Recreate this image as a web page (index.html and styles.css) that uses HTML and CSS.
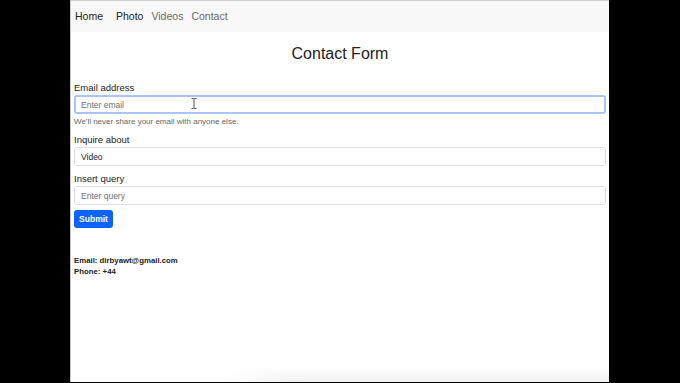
FILE: index.html
```html
<!DOCTYPE html>
<html lang="en">
<head>
  <meta charset="UTF-8">
  <meta name="viewport" content="width=device-width, initial-scale=1.0">
  <title>Contact</title>
  <link rel="stylesheet" href="styles.css">
</head>
<body>
  <div class="page">
    <nav class="navbar">
      <a class="nav-link active" href="#">Home</a>
      <a class="nav-link active" href="#">Photo</a>
      <a class="nav-link" href="#">Videos</a>
      <a class="nav-link" href="#">Contact</a>
    </nav>

    <h1 class="title">Contact Form</h1>

    <form class="contact-form">
      <label class="form-label" for="email">Email address</label>
      <div class="field-wrap">
        <input type="email" id="email" class="form-control focused" placeholder="Enter email">
        <svg class="text-cursor" width="6" height="11" viewBox="0 0 6 11">
          <path d="M0.5 0.5h2l0.5 0.5l0.5 -0.5h2M3 1v9M0.5 10.5h2l0.5 -0.5l0.5 0.5h2" fill="none" stroke="#555" stroke-width="1"/>
        </svg>
      </div>
      <div class="form-text">We'll never share your email with anyone else.</div>

      <label class="form-label" for="inquire">Inquire about</label>
      <input type="text" id="inquire" class="form-control" value="Video">

      <label class="form-label" for="query">Insert query</label>
      <input type="text" id="query" class="form-control" placeholder="Enter query">

      <button type="button" class="btn-submit">Submit</button>
    </form>

    <div class="contact-info">
      <div>Email: dirbyawt@gmail.com</div>
      <div>Phone: +44</div>
    </div>
  </div>
</body>
</html>
```

FILE: styles.css
```css
body {
  margin: 0;
  background: #000;
  height: 383px;
  overflow: hidden;
  font-family: 'Liberation Sans', Arial, Helvetica, sans-serif;
}

.page {
  width: 539px;
  height: 382px;
  margin-left: 70px;
  background: #fff;
  border-left: 1px solid #c8c8c8;
  border-top: 1px solid #d0d0d0;
  position: relative;
  overflow: hidden;
  box-sizing: border-box;
}

.page::after {
  content: '';
  position: absolute;
  left: 150px;
  right: 0;
  bottom: 0;
  height: 16px;
  background: linear-gradient(to bottom, rgba(0, 0, 0, 0), rgba(0, 0, 0, 0.06));
  -webkit-mask-image: linear-gradient(to right, transparent, #000 80px);
  mask-image: linear-gradient(to right, transparent, #000 80px);
}

.navbar {
  height: 31px;
  box-sizing: border-box;
  padding-bottom: 2px;
  background: #f8f8f8;
  display: flex;
  align-items: center;
  padding-left: 4px;
  gap: 8px;
}

.nav-link {
  font-size: 10.5px;
  color: #6a6a6a;
  text-decoration: none;
}

.nav-link.active {
  color: #222;
}

.nav-link:first-child {
  margin-right: 5px;
}

.title {
  margin: 12px 0 0;
  font-size: 16px;
  line-height: 20px;
  font-weight: normal;
  text-align: center;
  color: #222;
}

.contact-form {
  padding: 0 3px 0 3px;
  margin-top: 18px;
  display: flex;
  flex-direction: column;
  align-items: flex-start;
}

.form-label {
  font-size: 9.5px;
  line-height: 12px;
  color: #222;
  margin-bottom: 1px;
}

.field-wrap {
  position: relative;
  width: 100%;
}

.form-control {
  display: block;
  width: 100%;
  height: 19px;
  box-sizing: border-box;
  padding: 0 6px;
  font-family: inherit;
  font-size: 8.5px;
  color: #222;
  border: 1px solid #dedede;
  border-radius: 3px;
  background: #fff;
  outline: none;
  margin-bottom: 7px;
}

.form-control::placeholder {
  color: #6f6f6f;
}

.form-control.focused {
  border: 2px solid #a9c5f6;
  padding: 0 5px;
  margin-bottom: 2px;
}

.text-cursor {
  position: absolute;
  left: 117px;
  top: 3px;
}

.form-text {
  font-size: 8px;
  line-height: 12px;
  color: #666;
  margin-bottom: 6px;
}

.btn-submit {
  margin-top: -2px;
  width: 39px;
  height: 18px;
  padding: 0;
  background: #0d63f8;
  color: #fff;
  border: none;
  border-radius: 3px;
  font-family: inherit;
  font-size: 8.5px;
  font-weight: bold;
  cursor: pointer;
}

.contact-info {
  margin-top: 27px;
  padding-left: 3px;
  font-size: 7.8px;
  line-height: 11px;
  font-weight: bold;
  color: #222;
}
```
